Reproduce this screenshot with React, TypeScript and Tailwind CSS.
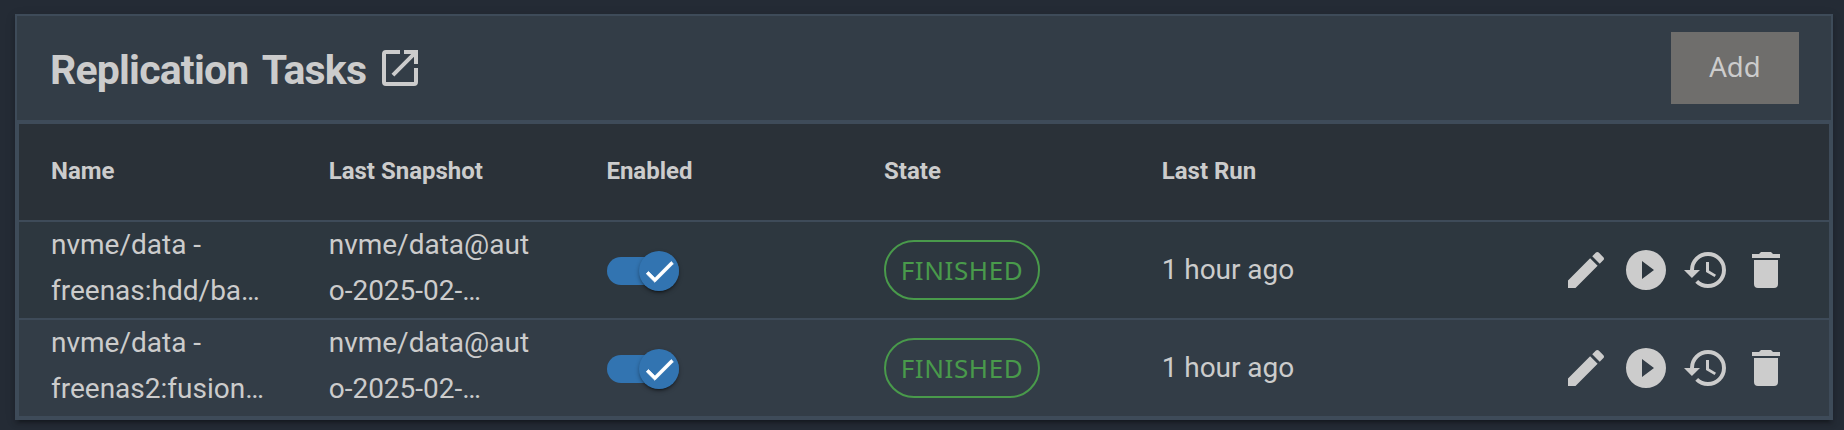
const icons = {
  open: 'M14 3v2h3.59l-9.83 9.83 1.41 1.41L19 6.41V10h2V3m-2 16H5V5h7V3H5a2 2 0 0 0-2 2v14a2 2 0 0 0 2 2h14a2 2 0 0 0 2-2v-7h-2v7z',
  edit: 'M20.71 7.04c.39-.39.39-1.04 0-1.41l-2.34-2.34c-.37-.39-1.02-.39-1.41 0l-1.84 1.83 3.75 3.75M3 17.25V21h3.75L17.81 9.93l-3.75-3.75L3 17.25z',
  run: 'M10 16.5v-9l6 4.5M12 2A10 10 0 0 0 2 12a10 10 0 0 0 10 10 10 10 0 0 0 10-10A10 10 0 0 0 12 2z',
  restore:
    'M13.5 8H12v5l4.28 2.54.72-1.21-3.5-2.08V8M13 3a9 9 0 0 0-9 9H1l3.96 4.03L9 12H6a7 7 0 0 1 7-7 7 7 0 0 1 7 7 7 7 0 0 1-7 7c-1.93 0-3.68-.79-4.94-2.06l-1.42 1.42A8.896 8.896 0 0 0 13 21a9 9 0 0 0 9-9 9 9 0 0 0-9-9z',
  remove: 'M19 4h-3.5l-1-1h-5l-1 1H5v2h14M6 19a2 2 0 0 0 2 2h8a2 2 0 0 0 2-2V7H6v12z',
  check: 'M9 16.17 4.83 12l-1.42 1.41L9 19 21 7l-1.41-1.41z',
};

function Icon({ name, className = 'size-12' }: { name: keyof typeof icons; className?: string }) {
  return (
    <svg viewBox="0 0 24 24" fill="currentColor" className={`shrink-0 ${className}`}>
      <path d={icons[name]} />
    </svg>
  );
}

function Toggle() {
  return (
    <div className="mt-0.5 ml-px flex h-7 w-[72px] items-center justify-end rounded-full bg-[#3274b1]">
      <div className="flex size-10 items-center justify-center rounded-full bg-[#3274b1] text-white shadow-[0_3px_2px_-2px_rgba(0,0,0,0.4),0_2px_4px_rgba(0,0,0,0.35)]">
        <svg viewBox="0 0 24 24" fill="currentColor" stroke="currentColor" strokeWidth="0.5" className="size-[37px] shrink-0">
          <path d={icons.check} />
        </svg>
      </div>
    </div>
  );
}

const grid = 'grid grid-cols-[277.7px_277.7px_277.7px_277.7px_1fr_auto] items-center pl-8';

const tasks = [
  { name: ['nvme/data -', 'freenas:hdd/ba…'], snapshot: ['nvme/data@aut', 'o-2025-02-…'], bg: 'bg-[#2d373f]' },
  { name: ['nvme/data -', 'freenas2:fusion…'], snapshot: ['nvme/data@aut', 'o-2025-02-…'], bg: 'bg-[#333d47]' },
];

function TwoLines({ lines }: { lines: string[] }) {
  return (
    <div className="pb-1 leading-[46px]">
      {lines.map((line) => (
        <div key={line}>{line}</div>
      ))}
    </div>
  );
}

export default function App() {
  return (
    <div className="h-[430px] w-[1844px] overflow-hidden bg-[#242b35] pt-3.5 pl-[15px] font-['Roboto',sans-serif] text-[#cccccc]">
      <section className="h-[406px] w-[1818px] border-2 border-[#3e4b59] bg-[#333d47] shadow-[0_6px_2px_-4px_rgba(0,0,0,0.2),0_4px_4px_rgba(0,0,0,0.14),0_2px_10px_rgba(0,0,0,0.12)]">
        <header className="flex h-[104px] items-center justify-between pr-8 pl-[33px]">
          <div className="flex items-center gap-2.5">
            <h2 className="w-[316px] pt-1 text-[41px] leading-[60px] font-bold tracking-[-0.8px] whitespace-nowrap [word-spacing:5px]">
              Replication Tasks
            </h2>
            <Icon name="open" />
          </div>
          <button className="h-[72px] w-32 bg-[#6f6e6c] pb-[3px] font-['Noto_Sans',sans-serif] text-[27.5px] font-normal">Add</button>
        </header>
        <div className="border-2 border-t-4 border-[#3e4b59]">
          <div className={`h-24 bg-[#2a3138] pb-0.5 text-2xl font-bold ${grid}`}>
            <div>Name</div>
            <div>Last Snapshot</div>
            <div>Enabled</div>
            <div>State</div>
            <div>Last Run</div>
          </div>
          {tasks.map((task) => (
            <div key={task.name[1]} className={`h-[98px] border-t-2 border-[#3e4b59] text-[28px] ${task.bg} ${grid}`}>
              <TwoLines lines={task.name} />
              <TwoLines lines={task.snapshot} />
              <Toggle />
              <div>
                <div className="flex h-[60px] w-[156px] items-center justify-center rounded-full border-2 border-[#499a4b] pt-px font-['Noto_Sans',sans-serif] text-[26px] font-normal tracking-[0.6px] text-[#499a4b]">
                  FINISHED
                </div>
              </div>
              <div className="tracking-[-0.05px]">1 hour ago</div>
              <div className="flex gap-3 pr-[39px]">
                <Icon name="edit" />
                <Icon name="run" />
                <Icon name="restore" />
                <Icon name="remove" />
              </div>
            </div>
          ))}
        </div>
      </section>
    </div>
  );
}
